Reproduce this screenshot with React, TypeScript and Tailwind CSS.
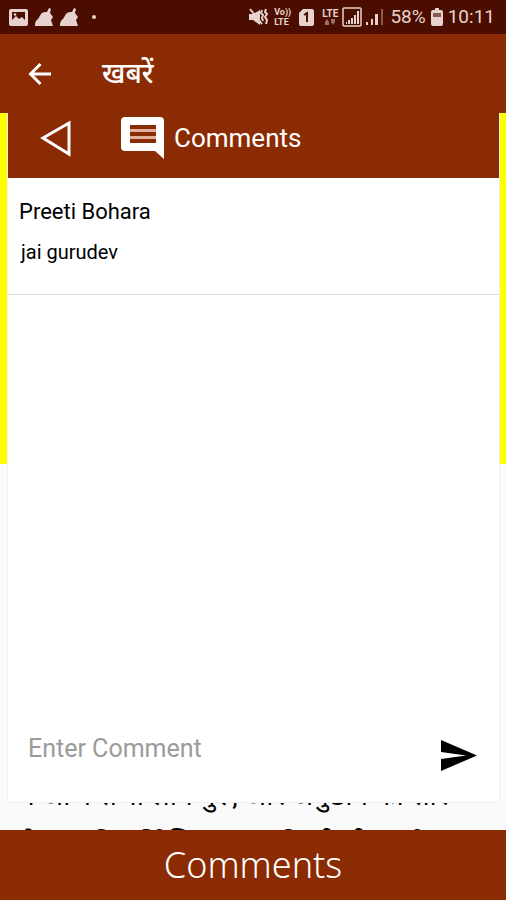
import { useState } from "react";
import type { FormEvent } from "react";

type Comment = {
  id: number;
  author: string;
  text: string;
};

const initialComments: Comment[] = [
  { id: 1, author: "Preeti Bohara", text: "jai gurudev" },
];

function FoxIcon() {
  return (
    <svg viewBox="0 0 18 18" className="h-[18px] w-[18px]" fill="currentColor">
      <path d="M0 18c0-4 1-6 3-7l3-5c1-1.500 3-2 6-2l2-4 2 1-1 4 3 4-2 3 2 6z" />
    </svg>
  );
}

function StatusBar() {
  return (
    <div className="flex h-[34px] shrink-0 items-center justify-between bg-[#4b0d00] pr-[11px] pl-[9px] text-[#e6d3cd]">
      <div className="flex items-center gap-[7px]">
        <svg viewBox="0 0 19 17" className="h-[17px] w-[19px]">
          <rect width="19" height="17" rx="2" fill="currentColor" />
          <path d="M3 3h13v8l-3-3-3 2-3-3-4 4z" fill="#4b0d00" />
          <circle cx="6" cy="5.500" r="1.300" fill="currentColor" />
        </svg>
        <FoxIcon />
        <FoxIcon />
        <span className="ml-[7px] h-1 w-1 rounded-full bg-current" />
      </div>

      <div className="flex items-center">
        <svg viewBox="0 0 20 18" className="h-[18px] w-5" fill="currentColor">
          <path d="M0 6h4l7-4v15l-7-5H0z" />
          <path
            d="M1 1l12 15"
            fill="none"
            stroke="currentColor"
            strokeWidth="2"
          />
          <path
            d="M13 2l-1 3 2 2-1 3 1 3M17 1l-1 3 2 2-2 3 2 3-1 4"
            fill="none"
            stroke="currentColor"
            strokeWidth="2"
          />
        </svg>
        <span className="ml-[5px] flex flex-col text-[9px] leading-[10px] font-bold">
          <span>Vo))</span>
          <span>LTE</span>
        </span>
        <svg viewBox="0 0 15 17" className="ml-[8px] h-[17px] w-[15px]">
          <path
            d="M4 0h9a2 2 0 0 1 2 2v13a2 2 0 0 1-2 2H2a2 2 0 0 1-2-2V4z"
            fill="currentColor"
          />
          <path d="M5 6l3-2v9" fill="none" stroke="#4b0d00" strokeWidth="2" />
        </svg>
        <span className="ml-[8px] flex flex-col items-center text-[10px] leading-[10px] font-bold">
          <span>LTE</span>
          <svg viewBox="0 0 10 6" className="h-[6px] w-[10px] opacity-50">
            <path d="M0 3l2-3 2 3v3H0zM6 0h4v3L8 6 6 3z" fill="currentColor" />
          </svg>
        </span>
        <svg viewBox="0 0 20 20" className="ml-1 h-5 w-5">
          <rect
            x="1"
            y="1"
            width="18"
            height="18"
            rx="1"
            fill="none"
            stroke="currentColor"
            strokeWidth="1.500"
          />
          <path
            d="M4 17v-2h1v2zM6 17v-4h2v4zM9 17v-6h2v6zM12 17V8h2v9zM15 17V4h2v13z"
            fill="currentColor"
          />
        </svg>
        <svg viewBox="0 0 18 18" className="ml-[4px] h-[18px] w-[18px]" fill="currentColor">
          <path d="M0 17v-3h2v3zM5 17v-6h2v6zM9 17V6h3v11z" />
          <path d="M15 17V1h2v16z" opacity="0.4" />
        </svg>
        <span className="ml-[6px] text-[19px] leading-6">58%</span>
        <svg viewBox="0 0 12 18" className="ml-[5px] h-[18px] w-3">
          <path
            d="M4 0h4v2h2a2 2 0 0 1 2 2v12a2 2 0 0 1-2 2H2a2 2 0 0 1-2-2V4a2 2 0 0 1 2-2h2z"
            fill="currentColor"
          />
          <path d="M2 5h8v4H2z" fill="#8a5a50" />
        </svg>
        <span className="ml-[5px] text-[19px] leading-6">10:11</span>
      </div>
    </div>
  );
}

function CommentsPanel() {
  const [comments, setComments] = useState(initialComments);
  const [draft, setDraft] = useState("");

  const onSubmit = (e: FormEvent) => {
    e.preventDefault();
    if (!draft.trim()) return;
    setComments([
      ...comments,
      { id: comments.length + 1, author: "You", text: draft.trim() },
    ]);
    setDraft("");
  };

  return (
    <section className="absolute top-0 right-[6px] bottom-[27px] left-[7px] flex flex-col border border-t-0 border-[#f0f0f0] bg-white">
      <header className="flex h-[65px] shrink-0 items-center bg-[#8b2b03] pb-4 pl-8 text-white">
        <button type="button" aria-label="Close comments">
          <svg viewBox="0 0 32 38" className="h-[38px] w-8">
            <path
              d="M3 19L29 4v31z"
              fill="none"
              stroke="currentColor"
              strokeWidth="3"
            />
          </svg>
        </button>
        <svg
          viewBox="0 0 43 43"
          className="ml-[49px] h-[43px] w-[43px]"
          fill="currentColor"
        >
          <path
            fillRule="evenodd"
            d="M4 1h35a4 4 0 0 1 4 4v38l-9-8H4a4 4 0 0 1-4-4V5a4 4 0 0 1 4-4zm5 8v18h26V9z"
          />
          <path d="M9 13h26v3H9zM9 20h26v3H9z" fill="#e0b09c" />
        </svg>
        <h2 className="ml-[10px] text-[26px] leading-8">Comments</h2>
      </header>

      <ul className="flex-1 overflow-auto">
        {comments.map((comment) => (
          <li
            key={comment.id}
            className="h-[117px] border-b border-[#dcdcdc] px-[11px] pt-5 text-black"
          >
            <p className="text-[22px] leading-7">{comment.author}</p>
            <p className="mt-3 pl-[2px] text-xl leading-7">{comment.text}</p>
          </li>
        ))}
      </ul>

      <form
        onSubmit={onSubmit}
        className="flex h-[106px] shrink-0 items-center pr-[22px] pl-5"
      >
        <input
          type="text"
          aria-label="Enter Comment"
          placeholder="Enter Comment"
          value={draft}
          onChange={(e) => setDraft(e.target.value)}
          className="min-w-0 flex-1 text-[25px] leading-8 outline-none placeholder:text-[#9b9b9b]"
        />
        <button type="submit" aria-label="Send comment" className="mt-3">
          <svg viewBox="0 0 36 31" className="h-[31px] w-9" fill="currentColor">
            <path d="M0 0l36 15.500L0 31V19l25-3.500L0 12z" />
          </svg>
        </button>
      </form>
    </section>
  );
}

export default function App() {
  return (
    <div className="flex h-dvh flex-col overflow-hidden bg-[#fafafa] font-[Roboto,'Noto_Sans',sans-serif]">
      <StatusBar />

      <header className="flex h-[79px] shrink-0 items-center bg-[#8b2b03] pl-7 text-white">
        <button type="button" aria-label="Back">
          <svg viewBox="0 0 24 24" className="h-6 w-6">
            <path
              d="M23 12H3M12.500 2L2.500 12l10 10"
              fill="none"
              stroke="currentColor"
              strokeWidth="3"
            />
          </svg>
        </button>
        <h1 lang="hi" className="ml-[50px] text-[28px] leading-8 font-medium">
          खबरें
        </h1>
      </header>

      <main className="relative min-h-0 flex-1">
        <div className="h-full overflow-hidden">
          <div className="h-[351px] bg-[#ffff00]" />
          <p
            lang="hi"
            className="mt-[307px] px-[18px] text-[28px] leading-[49px] whitespace-nowrap text-black"
          >
            में आज सभी लोग गुरु, और अनुष्ठान का सार
            <br />
            से संत की मूर्ति शिव वाला की भी थी कार्य
          </p>
        </div>
        <CommentsPanel />
      </main>

      <button
        type="button"
        className="h-[70px] shrink-0 bg-[#8b2b03] font-['Noto_Sans',sans-serif] text-[36px] leading-[70px] font-light text-white"
      >
        Comments
      </button>
    </div>
  );
}
